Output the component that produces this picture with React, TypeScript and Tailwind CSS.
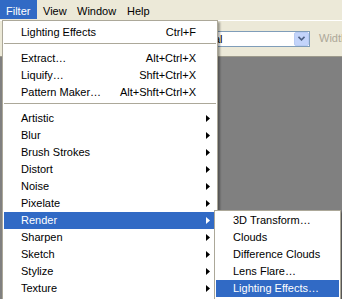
import React from 'react';

type Item =
  | { kind: 'sep' }
  | { kind: 'item'; label: string; shortcut?: string; sub?: boolean; active?: boolean };

const filterItems: Item[] = [
  { kind: 'item', label: 'Lighting Effects', shortcut: 'Ctrl+F' },
  { kind: 'sep' },
  { kind: 'item', label: 'Extract…', shortcut: 'Alt+Ctrl+X' },
  { kind: 'item', label: 'Liquify…', shortcut: 'Shft+Ctrl+X' },
  { kind: 'item', label: 'Pattern Maker…', shortcut: 'Alt+Shft+Ctrl+X' },
  { kind: 'sep' },
  { kind: 'item', label: 'Artistic', sub: true },
  { kind: 'item', label: 'Blur', sub: true },
  { kind: 'item', label: 'Brush Strokes', sub: true },
  { kind: 'item', label: 'Distort', sub: true },
  { kind: 'item', label: 'Noise', sub: true },
  { kind: 'item', label: 'Pixelate', sub: true },
  { kind: 'item', label: 'Render', sub: true, active: true },
  { kind: 'item', label: 'Sharpen', sub: true },
  { kind: 'item', label: 'Sketch', sub: true },
  { kind: 'item', label: 'Stylize', sub: true },
  { kind: 'item', label: 'Texture', sub: true },
];

const renderItems = ['3D Transform…', 'Clouds', 'Difference Clouds', 'Lens Flare…', 'Lighting Effects…'];

const Arrow: React.FC<{ white?: boolean }> = ({ white }) => (
  <svg width="4" height="7" viewBox="0 0 4 7" className="block">
    <polygon points="0,0 4,3.5 0,7" fill={white ? '#ffffff' : '#000000'} />
  </svg>
);

const MenuRow: React.FC<{ item: Extract<Item, { kind: 'item' }> }> = ({ item }) => (
  <div
    className={`flex h-[17px] items-center justify-between pl-[17px] leading-[17px] ${
      item.active ? 'bg-[#316ac5] text-white' : 'text-black'
    }`}
  >
    <span className="whitespace-nowrap">{item.label}</span>
    {item.shortcut && <span className="mr-[20px] whitespace-nowrap">{item.shortcut}</span>}
    {item.sub && (
      <span className="mr-[6px]">
        <Arrow white={item.active} />
      </span>
    )}
  </div>
);

const App: React.FC = () => {
  return (
    <div className="relative h-[299px] w-[342px] overflow-hidden bg-[#808080] font-['Liberation_Sans',Arial,sans-serif] text-[11px]">
      {/* menu bar */}
      <div className="flex h-[20px] bg-[#ece9d8]">
        <div className="h-[19px] w-[37px] bg-[#316ac5] pl-[6px] pt-[3px] leading-[16px] text-white">Filter</div>
        <div className="h-[19px] w-[34px] pl-[6px] pt-[3px] leading-[16px] text-black">View</div>
        <div className="h-[19px] w-[50px] pl-[6px] pt-[3px] leading-[16px] text-black">Window</div>
        <div className="h-[19px] pl-[6px] pt-[3px] leading-[16px] text-black">Help</div>
      </div>

      {/* options toolbar */}
      <div className="flex h-[37px] items-center overflow-hidden border-t border-t-[#ffffff] border-b border-b-[#9d9a8c] bg-[#ece9d8]">
        <div className="ml-[183px] flex h-[16px] w-[127px] shrink-0 items-center border border-[#7f9db9] bg-white">
          <span className="flex-1 pl-[3px] leading-[14px] text-black">Normal</span>
          <div className="flex h-[14px] w-[15px] items-center justify-center rounded-[2px] border border-[#b8cbf3] bg-[#c3d4fa]">
            <svg width="7" height="5" viewBox="0 0 7 5">
              <polyline points="0.5,0.8 3.5,3.8 6.5,0.8" fill="none" stroke="#4d6185" strokeWidth="1.6" />
            </svg>
          </div>
        </div>
        <span className="ml-[9px] shrink-0 whitespace-nowrap text-[#aca899]">Width:</span>
      </div>

      {/* Filter menu */}
      <div className="absolute left-[2px] top-[20px] w-[216px] border border-[#aca899] bg-white px-[1px] pt-[3px] pb-[3px] shadow-[2px_2px_2px_rgba(0,0,0,0.35)]">
        {filterItems.map((item, i) =>
          item.kind === 'sep' ? (
            <div key={i} className="h-[9px] pt-[2px]">
              <div className="h-[1px] bg-[#aca899]" />
            </div>
          ) : (
            <MenuRow key={i} item={item} />
          )
        )}
      </div>

      {/* Render submenu */}
      <div className="absolute left-[214px] top-[210px] w-[127px] border border-[#aca899] bg-white px-[1px] pt-[1px] pb-[3px] shadow-[2px_2px_2px_rgba(0,0,0,0.35)]">
        {renderItems.map((label, i) => (
          <div
            key={label}
            className={`h-[17px] whitespace-nowrap pl-[17px] leading-[17px] ${
              i === renderItems.length - 1 ? 'bg-[#316ac5] text-white' : 'text-black'
            }`}
          >
            {label}
          </div>
        ))}
      </div>
    </div>
  );
};

export default App;
